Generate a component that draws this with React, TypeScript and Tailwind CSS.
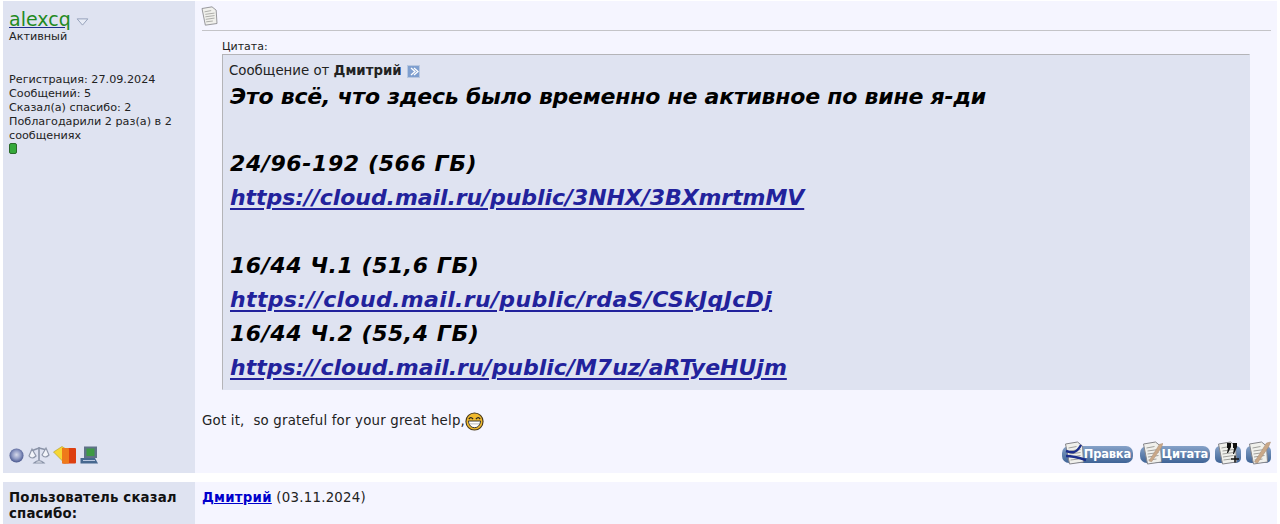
import React from "react";

const Doc = ({ className = "" }: { className?: string }) => (
  <svg viewBox="0 0 20 24" className={className}>
    <path d="M1 3 L13 1 L18 5 L19 21 L5 23 Z" fill="#f0f0ec" stroke="#85858a" strokeWidth="1" />
    <path d="M4 7L12 5.5M5 10L16 8.5M5 13L16 11.5M5.5 16L16 14.5M6 19L14 18" stroke="#a0a09c" strokeWidth="1" />
  </svg>
);

const Pen = () => (
  <svg viewBox="0 0 24 24" className="absolute inset-0 w-full h-full">
    <path d="M8 21 L20 2 L24 1 L22 6 L11 22 Z" fill="#c9a888" stroke="#a88a70" strokeWidth="0.5" />
  </svg>
);

const PillButton = ({ className, label, kind }: { className: string; label: string; kind: "edit" | "quote" }) => (
  <div className={`relative h-[24px] ${className}`}>
    <div className="absolute left-0 right-0 top-[5px] h-[17px] rounded-[7px] bg-gradient-to-b from-[#86a2c8] to-[#3f6496] flex items-center justify-end pr-[2px]">
      <span className="text-white font-bold text-[11.5px] leading-none tracking-[-0.2px]">{label}</span>
    </div>
    <div className="absolute left-[2px] top-0 w-[21px] h-[24px]">
      <Doc className="w-full h-full" />
      {kind === "edit" ? (
        <svg viewBox="0 0 24 24" className="absolute inset-0 w-[24px] h-[24px]">
          <path d="M2 10 C8 12 12 13 17 4 M2 15 C10 15 16 17 22 19" stroke="#1c2f8c" strokeWidth="2.4" fill="none" />
        </svg>
      ) : (
        <Pen />
      )}
    </div>
  </div>
);

const SquareButton = ({ kind, className }: { kind: "multi" | "reply"; className: string }) => (
  <div className={`relative h-[24px] ${className}`}>
    <div className="absolute left-0 right-0 top-[5px] h-[17px] rounded-[5px] bg-gradient-to-b from-[#86a2c8] to-[#3f6496]" />
    <Doc className="absolute left-[2px] top-0 w-[21px] h-[24px]" />
    {kind === "multi" ? (
      <svg viewBox="0 0 24 24" className="absolute inset-0 w-full h-full">
        <path d="M11 2 h4 v4 l-3 6 h-1 l1 -5 h-1 Z M17 2 h4 v4 l-3 7 h-1 l1 -6 h-1 Z" fill="#111" />
        <path d="M15 18H23M19 14.5V21.5" stroke="#111" strokeWidth="1.5" />
      </svg>
    ) : (
      <Pen />
    )}
  </div>
);

const Smile = () => (
  <svg viewBox="0 0 20 20" className="w-[19px] h-[19px] inline-block">
    <circle cx="10" cy="10" r="9" fill="#f0b92d" stroke="#4a3a1a" strokeWidth="1.2" />
    <path d="M4 7.5 Q6 4.5 8.5 7.5 M11.5 7.5 Q14 4.5 16 7.5" stroke="#222" strokeWidth="1.3" fill="none" />
    <path d="M3.5 9.5 H16.5 Q15.5 16.5 10 16.5 Q4.5 16.5 3.5 9.5 Z" fill="#fff" stroke="#333" strokeWidth="1" />
    <path d="M4 12.5H16" stroke="#999" strokeWidth="0.7" />
  </svg>
);

const quoteLine = "text-black h-[34px] leading-[34px] whitespace-nowrap";
const quoteLink = "text-[#22229c] underline decoration-[1.5px] underline-offset-[3px] h-[34px] leading-[34px] whitespace-nowrap";

export default function App() {
  return (
    <div className="w-[1280px] h-[524px] overflow-hidden bg-white text-[#222] text-[11.2px] leading-[14px] [font-family:'DejaVu_Sans',sans-serif] pl-[3px] pr-[3px] pt-[1px]">
      <div className="flex h-[472px]">
        <div className="w-[192px] bg-[#dfe3f1] flex flex-col justify-between pl-[6px] pt-[8px] pb-[8px]">
          <div>
            <div className="flex items-center h-[20px]">
              <span className="text-[19px] leading-[20px] text-[#1f8a1f] underline decoration-[#1c2f8c]">alexcq</span>
              <svg viewBox="0 0 14 9" className="w-[13px] h-[8px] ml-[5px] mt-[5px]">
                <path d="M1 1 H13 L7 8 Z" fill="#e8ecf6" stroke="#8d9bb5" strokeWidth="1" />
              </svg>
            </div>
            <div className="mt-[1px]">Активный</div>
            <div className="mt-[29px]">Регистрация: 27.09.2024</div>
            <div>Сообщений: 5</div>
            <div>Сказал(а) спасибо: 2</div>
            <div className="w-[175px]">Поблагодарили 2 раз(а) в 2 сообщениях</div>
            <div className="w-[8px] h-[11px] rounded-[2px] bg-[#35a93a] border border-[#2a6a2a]" />
          </div>
          <div className="flex items-center gap-[3px] h-[20px]">
            <svg viewBox="0 0 16 16" className="w-[15px] h-[15px] mr-[1px]">
              <defs>
                <radialGradient id="orb" cx="50%" cy="45%" r="55%">
                  <stop offset="0%" stopColor="#d6d9ea" />
                  <stop offset="55%" stopColor="#8f9ac4" />
                  <stop offset="100%" stopColor="#47558c" />
                </radialGradient>
              </defs>
              <circle cx="8" cy="8" r="7.5" fill="url(#orb)" />
            </svg>
            <svg viewBox="0 0 22 20" className="w-[22px] h-[20px]">
              <path d="M3 6 L11 3 L19 5 M11 2 V15" stroke="#8a93a8" strokeWidth="1.6" fill="none" />
              <path d="M6 18 Q11 13 16 18 Z" fill="#eceff6" stroke="#8a93a8" strokeWidth="1.2" />
              <path d="M1 11 L4 4 L8 11 Q4 15 1 11 Z M14 10 L18 3 L21 10 Q17 14 14 10 Z" fill="#f2f4f9" stroke="#8f97aa" strokeWidth="1.2" />
            </svg>
            <svg viewBox="0 0 23 18" className="w-[23px] h-[18px]">
              <path d="M0.5 6 L9 0.5 L13 3 L12 17.5 Z" fill="#f6d735" stroke="#b09a20" strokeWidth="0.6" />
              <rect x="9" y="2" width="14" height="15.5" rx="1" fill="#dd3f10" />
              <rect x="9" y="2" width="7" height="15.5" rx="1" fill="#ef7a1a" />
            </svg>
            <svg viewBox="0 0 18 18" className="w-[18px] h-[18px] ml-[1px]">
              <rect x="4" y="0.5" width="13" height="11.5" fill="#5f7288" />
              <rect x="6.5" y="2.5" width="8" height="7.5" fill="#3d9a44" />
              <path d="M0.5 12 L15 12 L18 17.5 L0.5 17.5 Z" fill="#47688f" />
              <path d="M3 14.5H15" stroke="#b9c8e0" strokeWidth="1" />
            </svg>
          </div>
        </div>
        <div className="flex-1 bg-[#f5f5ff] pl-[7px] pr-[6px] pt-[5px] flex flex-col">
          <div className="h-[25px] border-b border-[#c4c4c8]">
            <Doc className="w-[17px] h-[20px] -ml-[1px]" />
          </div>
          <div className="ml-[20px] mr-[21px] mt-[8px] flex flex-col">
            <div className="h-[15px] leading-[15px] text-[11px]">Цитата:</div>
            <div className="bg-[#dfe3f1] border border-t-[#b4b4b8] border-l-[#b4b4b8] border-r-[#dfe3f1] border-b-[#dfe3f1] h-[336px] pl-[6px] pt-[8px]">
              <div className="text-[13.33px] leading-[16px] flex items-center">
                <span>Сообщение от&nbsp;</span>
                <b>Дмитрий</b>
                <svg viewBox="0 0 13 13" className="w-[13px] h-[13px] ml-[5px]">
                  <rect x="0.5" y="0.5" width="12" height="12" fill="#7f9fcf" stroke="#b9c8e0" />
                  <path d="M4 3 L8 6.5 L4 10 M7 3 L11 6.5 L7 10" stroke="#fff" strokeWidth="1.3" fill="none" />
                </svg>
              </div>
              <div className="font-bold italic text-[22px] pl-[1px]">
                <div className={`${quoteLine} leading-[36px] tracking-[-0.23px]`}>Это всё, что здесь было временно не активное по вине я-ди</div>
                <div className={quoteLine} />
                <div className={`${quoteLine} tracking-[0.6px]`}>24/96-192 (566 ГБ)</div>
                <div className={`${quoteLink} tracking-[-0.07px]`}>https://cloud.mail.ru/public/3NHX/3BXmrtmMV</div>
                <div className={quoteLine} />
                <div className={`${quoteLine} tracking-[0.55px]`}>16/44 Ч.1 (51,6 ГБ)</div>
                <div className={`${quoteLink} tracking-[0.35px]`}>https://cloud.mail.ru/public/rdaS/CSkJqJcDj</div>
                <div className={`${quoteLine} tracking-[0.55px]`}>16/44 Ч.2 (55,4 ГБ)</div>
                <div className={quoteLink}>https://cloud.mail.ru/public/M7uz/aRTyeHUjm</div>
              </div>
            </div>
          </div>
          <div className="mt-[21px] text-[13.33px] tracking-[0.2px] flex items-center h-[20px]">
            <span className="whitespace-pre">Got it,  so grateful for your great help,</span>
            <Smile />
          </div>
          <div className="mt-auto mb-[8px] flex justify-end items-center">
            <PillButton className="w-[71px] mr-[7px]" label="Правка" kind="edit" />
            <PillButton className="w-[70px] mr-[5px]" label="Цитата" kind="quote" />
            <SquareButton className="w-[26px] mr-[5px]" kind="multi" />
            <SquareButton className="w-[25px]" kind="reply" />
          </div>
        </div>
      </div>
      <div className="flex h-[42px] mt-[9px]">
        <div className="w-[192px] bg-[#dfe3f1] pl-[6px] pt-[8px] font-bold text-[13.33px] tracking-[0.15px] leading-[16px] text-[#111]">
          Пользователь сказал спасибо:
        </div>
        <div className="flex-1 bg-[#f5f5ff] pl-[7px] pt-[8px] text-[13.33px] tracking-[0.25px] leading-[16px]">
          <a className="font-bold text-[#0000cc] underline">Дмитрий</a> (03.11.2024)
        </div>
      </div>
    </div>
  );
}
